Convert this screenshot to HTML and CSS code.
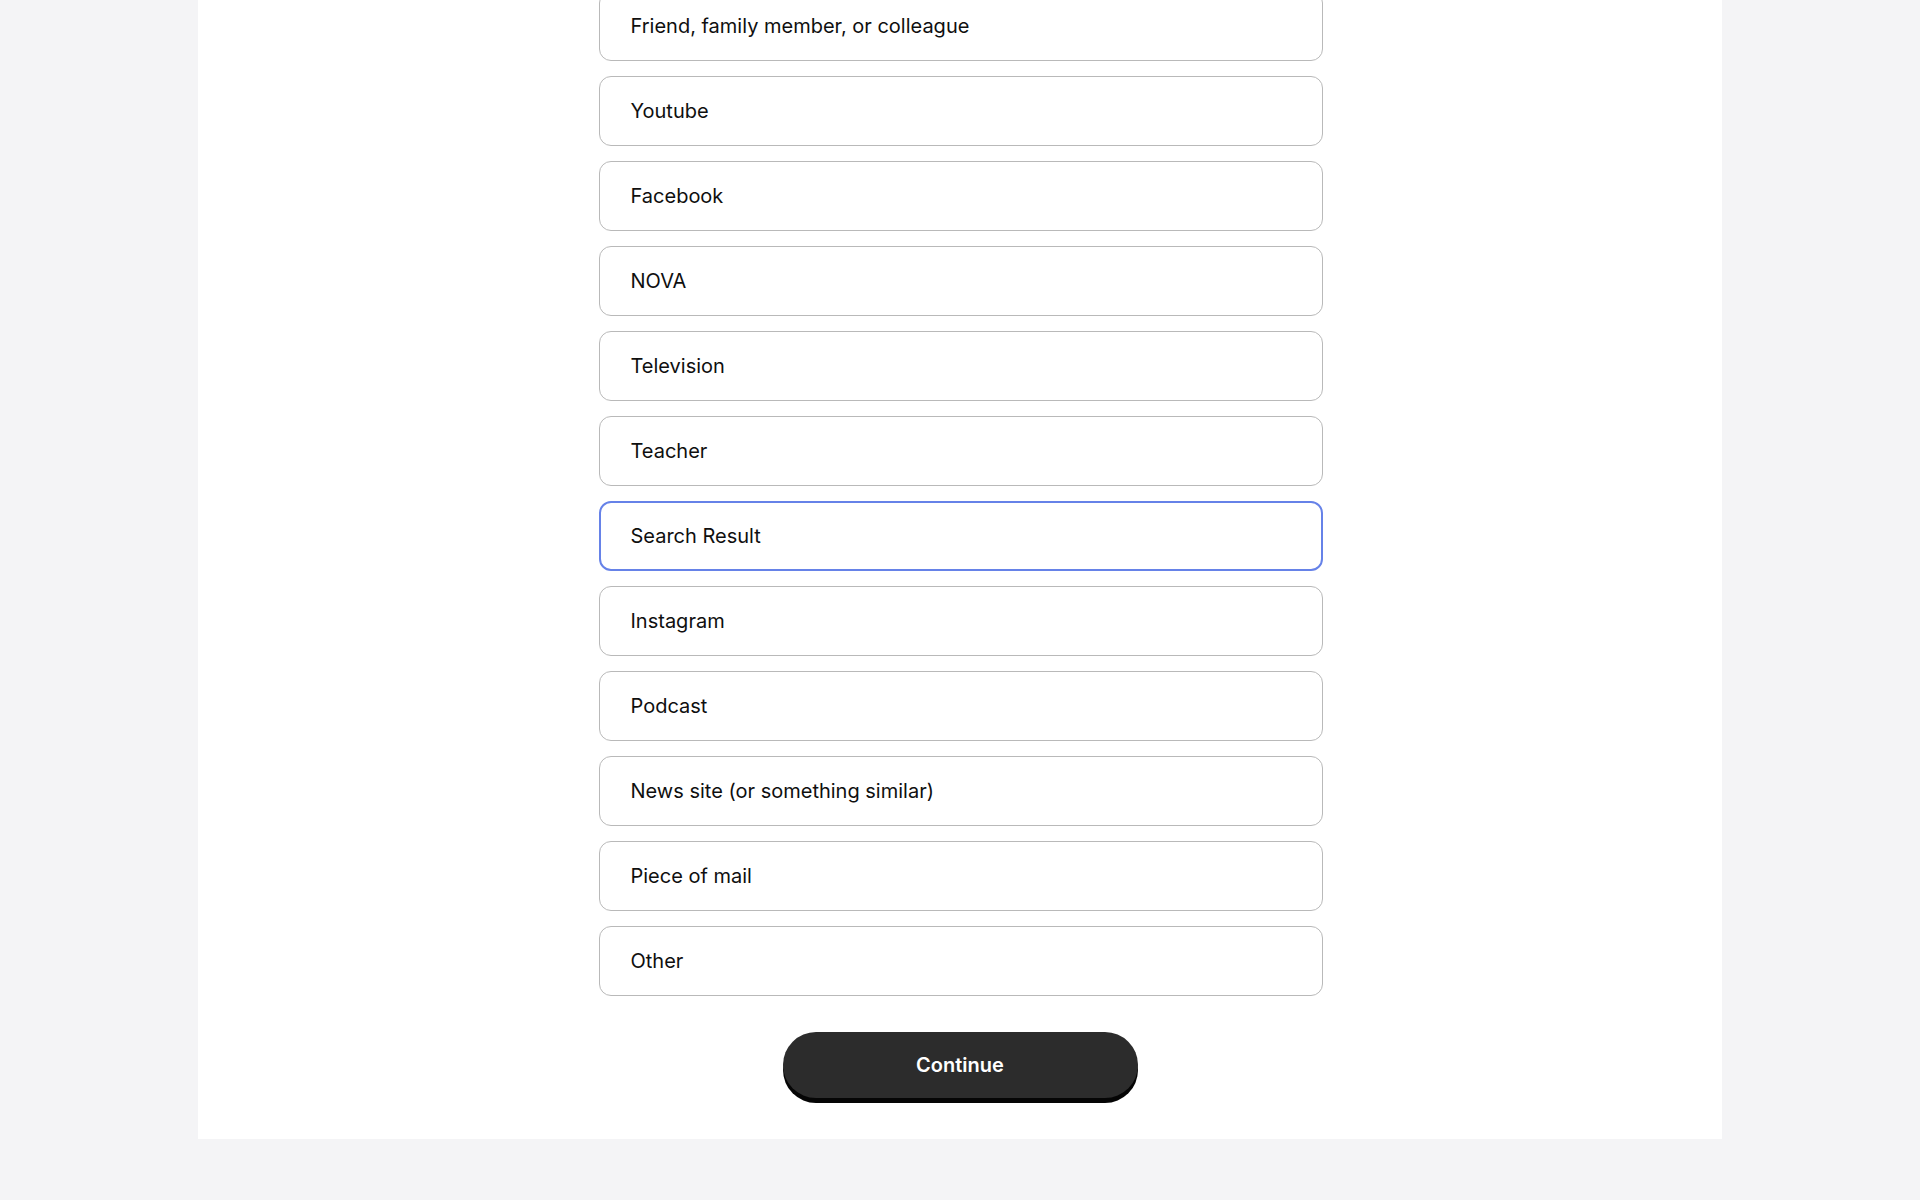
FILE: index.html
```html
<!DOCTYPE html>
<html lang="en">
<head>
<meta charset="utf-8">
<title>How did you hear about us?</title>
<link rel="stylesheet" href="styles.css">
</head>
<body>
<main class="panel">
  <div class="options">
    <button class="option">Friend, family member, or colleague</button>
    <button class="option">Youtube</button>
    <button class="option">Facebook</button>
    <button class="option">NOVA</button>
    <button class="option">Television</button>
    <button class="option">Teacher</button>
    <button class="option selected">Search Result</button>
    <button class="option">Instagram</button>
    <button class="option">Podcast</button>
    <button class="option">News site (or something similar)</button>
    <button class="option">Piece of mail</button>
    <button class="option">Other</button>
  </div>
  <button class="continue">Continue</button>
</main>
</body>
</html>
```

FILE: styles.css
```css
html, body {
  margin: 0;
  padding: 0;
}
body {
  background: #f4f4f6;
  font-family: Inter, "Noto Sans", sans-serif;
  color: #111111;
  height: 1200px;
  overflow: hidden;
}
.panel {
  width: 1524px;
  margin: 0 auto;
  background: #ffffff;
  display: flex;
  flex-direction: column;
  align-items: center;
  padding-bottom: 41px;
}
.options {
  margin-top: -9px;
  margin-left: 1px;
  width: 724px;
  display: flex;
  flex-direction: column;
  gap: 15px;
}
.option {
  box-sizing: border-box;
  height: 70px;
  width: 100%;
  border: 1px solid #b9b9b9;
  border-radius: 12px;
  background: #fff;
  padding: 0 31px;
  display: flex;
  align-items: center;
  font-family: inherit;
  font-size: 20px;
  font-weight: 400;
  color: #0f0f0f;
  text-align: left;
  cursor: pointer;
}
.option.selected {
  border: 2px solid #6682e8;
  padding: 0 30px;
}
.continue {
  margin-top: 36px;
  width: 355px;
  height: 66px;
  border: none;
  border-radius: 33px;
  background: #2c2c2c;
  box-shadow: 0 5px 0 #050505;
  color: #ffffff;
  font-family: inherit;
  font-size: 20px;
  font-weight: 600;
  cursor: pointer;
}
```
